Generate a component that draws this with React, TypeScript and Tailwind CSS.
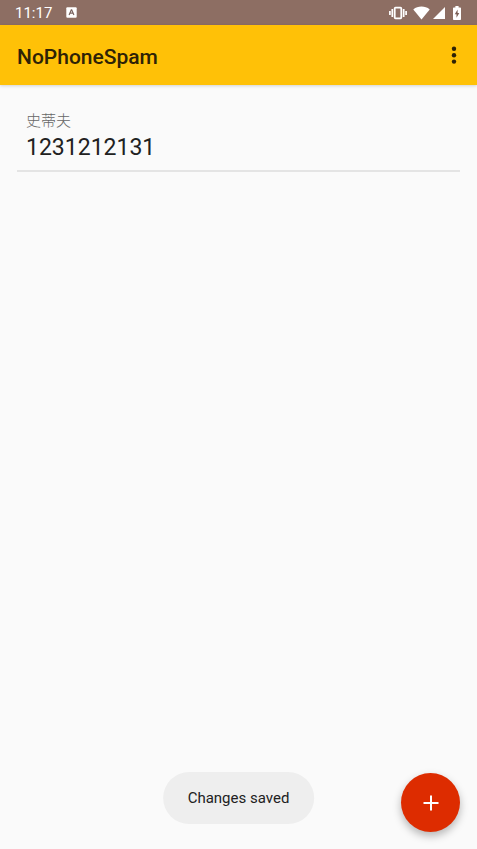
import { useState } from 'react';

interface BlockedNumber {
    id: number;
    name: string;
    number: string;
}

const initialNumbers: BlockedNumber[] = [
    { id: 1, name: '史蒂夫', number: '1231212131' },
];

function StatusBar() {
    return (
        <div className="flex h-[25px] items-center bg-[#8d6e63] px-4 pl-[15px] text-white">
            <span className="pt-px text-[15px] leading-6">11:17</span>
            <svg className="ml-3.5 mr-auto" width="11" height="11" viewBox="0 0 11 11">
                <rect x="0.3" y="0.2" width="10.4" height="10.6" rx="1" fill="#fff" />
                <path d="M3.1 7.9 5.3 2.8h.4l2.2 5.1M3.9 6.1h3.2" fill="none" stroke="#7b6560" strokeWidth="1.2" />
            </svg>

            <svg className="mr-[6px]" width="18" height="14" viewBox="0 0 18 14" fill="none" stroke="#fff">
                <rect x="5.7" y="1.6" width="6.6" height="10.8" rx="0.8" strokeWidth="1.8" />
                <path d="M3.3 3v8M14.7 3v8M.9 5v4M17.1 5v4" strokeWidth="1.7" />
            </svg>
            <svg className="mr-[3px]" width="17" height="14" viewBox="0 0 17 14">
                <path d="M8.5 13.6.3 3.4C2.6 1.6 5.4.6 8.5.6s5.9 1 8.2 2.8z" fill="#fff" />
            </svg>
            <svg className="mr-2" width="12" height="12" viewBox="0 0 12 12">
                <path d="M12 0v12H0z" fill="#fff" />
            </svg>
            <svg width="8" height="14" viewBox="0 0 8 14">
                <path d="M2.4 0h3.2v1.4h1.6a.8.8 0 0 1 .8.8v11a.8.8 0 0 1-.8.8H.8a.8.8 0 0 1-.8-.8v-11a.8.8 0 0 1 .8-.8h1.6z" fill="#fff" />
                <path d="M4.6 3.6 1.8 8.2h1.7v3.6l2.8-4.7H4.6z" fill="#7b5f56" />
            </svg>
        </div>
    );
}

export default function App() {
    const [numbers] = useState<BlockedNumber[]>(initialNumbers);

    return (
        <div className="flex min-h-screen flex-col bg-[#fafafa] font-['Roboto','Noto_Sans_CJK_SC',sans-serif] text-[#212121]">
            <StatusBar />

            <header className="flex h-[60px] items-center justify-between bg-[#ffc107] pl-[17px] pr-[11px] shadow-[0_1px_3px_rgba(0,0,0,0.16)]">
                <h1 className="pt-1 text-[21px] leading-7 font-medium text-[#2e2206]">NoPhoneSpam</h1>
                <button type="button" aria-label="More options" className="flex h-10 w-6 items-center justify-center">
                    <svg width="6" height="20" viewBox="0 0 6 20" fill="#2e2206">
                        <circle cx="3" cy="3.8" r="2.2" />
                        <circle cx="3" cy="10.2" r="2.2" />
                        <circle cx="3" cy="16.6" r="2.2" />
                    </svg>
                </button>
            </header>

            <main className="grow px-[17px] pt-4">
                <ul>
                    {numbers.map((entry) => (
                        <li key={entry.id} className="border-b-2 border-[#e4e4e4] px-[9px] pt-2.5 pb-1.5">
                            <p className="text-[15px] leading-5 font-light text-[#666666]">{entry.name}</p>
                            <p className="pt-px text-[23px] leading-8">{entry.number}</p>
                        </li>
                    ))}
                </ul>
            </main>

            {/* Toast */}
            <div role="status" className="fixed bottom-[25px] left-1/2 -translate-x-1/2 rounded-[26px] bg-[#eeeeee] px-[25px] py-4 text-[15px] leading-5 whitespace-nowrap">
                Changes saved
            </div>

            <button
                type="button"
                aria-label="Add number"
                className="fixed right-[17px] bottom-[17px] flex size-[59px] items-center justify-center rounded-full bg-[#dd2c00] shadow-[0_4px_8px_rgba(0,0,0,0.28)]"
            >
                <svg width="16" height="16" viewBox="0 0 16 16" fill="none" stroke="#fff" strokeWidth="2">
                    <path d="M8 .5v15M.5 8h15" />
                </svg>
            </button>
        </div>
    );
}
